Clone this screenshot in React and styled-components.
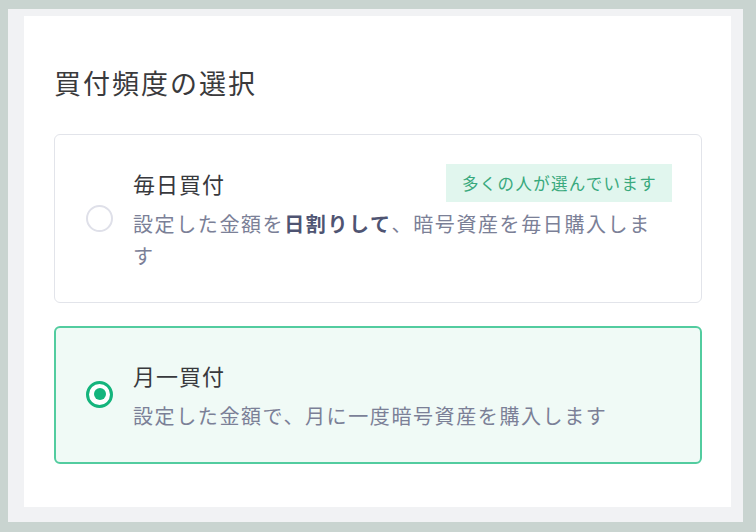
import React from "react";
import styled, { createGlobalStyle } from "styled-components";

const Global = createGlobalStyle`
  html, body { margin: 0; padding: 0; background: #c9d4d0; }
  body { font-family: "Noto Sans CJK JP", "Noto Sans", sans-serif; }
  * { box-sizing: border-box; }
`;

const Frame = styled.div`
  margin: 9px 0 0 8px;
  width: 735px;
  height: 513px;
  background: #f1f2f4;
  padding: 7px 12px 15px 16px;
`;

const Panel = styled.section`
  background: #ffffff;
  height: 100%;
  padding: 48px 29px 0 30px;
  display: flex;
  flex-direction: column;
`;

const Heading = styled.h2`
  margin: 0 0 32px 0;
  font-size: 27px;
  line-height: 38px;
  font-weight: 400;
  letter-spacing: 2px;
  color: #3a3a3c;
`;

const List = styled.div`
  display: flex;
  flex-direction: column;
  gap: 23px;
`;

const Card = styled.label`
  display: flex;
  align-items: center;
  gap: 20px;
  padding: 29px 29px 30px 31px;
  border-radius: 6px;
  border: ${(p) => (p.$selected ? "2px solid #52cc9f" : "1px solid #e2e4ea")};
  background: ${(p) => (p.$selected ? "#f0faf6" : "#ffffff")};
  ${(p) => (p.$selected ? "padding: 28px 28px 30px 30px;" : "")}
`;

const Radio = styled.span`
  flex: none;
  width: 27px;
  height: 27px;
  border-radius: 50%;
  border: ${(p) => (p.$checked ? "3.5px solid #14b47c" : "2.5px solid #dfe0e9")};
  background: #ffffff;
  display: flex;
  align-items: center;
  justify-content: center;
  &::after {
    content: "";
    display: ${(p) => (p.$checked ? "block" : "none")};
    width: 12px;
    height: 12px;
    border-radius: 50%;
    background: #14b47c;
  }
`;

const Body = styled.div`
  flex: 1;
  display: flex;
  flex-direction: column;
  gap: 6px;
`;

const TitleRow = styled.div`
  display: flex;
  align-items: center;
  justify-content: space-between;
  min-height: 38px;
`;

const Title = styled.span`
  font-size: 22px;
  line-height: 32px;
  letter-spacing: 1px;
  color: #38393d;
`;

const Badge = styled.span`
  background: #e1f6ee;
  color: #39a97d;
  font-size: 16.5px;
  line-height: 38px;
  height: 38px;
  letter-spacing: 1.3px;
  padding: 0 15px 0 16px;
`;

const Desc = styled.p`
  margin: 0;
  font-size: 20px;
  line-height: 32px;
  letter-spacing: 1.6px;
  color: #7b8097;
  padding-right: 10px;
`;

const Strong = styled.strong`
  font-weight: 700;
  color: #4f5472;
`;

export default function App() {
  return (
    <>
      <Global />
      <Frame>
        <Panel>
          <Heading>買付頻度の選択</Heading>
          <List>
            <Card>
              <Radio />
              <Body>
                <TitleRow>
                  <Title>毎日買付</Title>
                  <Badge>多くの人が選んでいます</Badge>
                </TitleRow>
                <Desc>
                  設定した金額を<Strong>日割りして</Strong>、暗号資産を毎日購入します
                </Desc>
              </Body>
            </Card>
            <Card $selected>
              <Radio $checked />
              <Body>
                <TitleRow>
                  <Title>月一買付</Title>
                </TitleRow>
                <Desc>設定した金額で、月に一度暗号資産を購入します</Desc>
              </Body>
            </Card>
          </List>
        </Panel>
      </Frame>
    </>
  );
}
